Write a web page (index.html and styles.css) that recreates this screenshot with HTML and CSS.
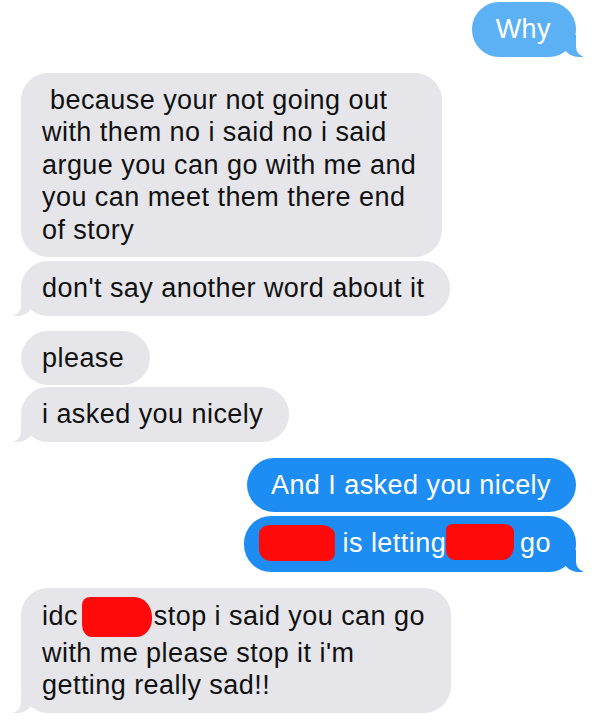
FILE: index.html
```html
<!DOCTYPE html>
<html>
<head>
<meta charset="utf-8">
<link rel="stylesheet" href="styles.css">
</head>
<body>
<div class="thread">
  <div class="bubble me light tail-r">Why</div>
  <div class="bubble them gap">&nbsp;because your not going out<br>with them no i said no i said<br>argue you can go with me and<br>you can meet them there end<br>of story</div>
  <div class="bubble them tight tail-l">don't say another word about it</div>
  <div class="bubble them mid">please</div>
  <div class="bubble them tight2 tail-l">i asked you nicely</div>
  <div class="bubble me gap">And I asked you nicely</div>
  <div class="bubble me tight tail-r"><span class="redact r1"></span> is letting<span class="redact r2"></span> go</div>
  <div class="bubble them gap tail-l">idc <span class="redact r3"></span>stop i said you can go<br>with me please stop it i'm<br>getting really sad!!</div>
</div>
</body>
</html>
```

FILE: styles.css
```css
* { box-sizing: border-box; }
html, body {
  margin: 0;
  background: #ffffff;
}
.thread {
  display: flex;
  flex-direction: column;
  align-items: flex-start;
  padding: 2px 24px 0 21px;
  font-family: "Liberation Sans", Arial, sans-serif;
  font-size: 27px;
  letter-spacing: 0.45px;
  line-height: 32.5px;
}
.bubble {
  position: relative;
  border-radius: 27px;
  white-space: nowrap;
}
.them {
  padding: 11px 26px 11px 21px;
  background: #e5e5ea;
  color: #111111;
}
.me {
  align-self: flex-end;
  padding: 11px 25px 11px 24px;
  background: #1d8cf3;
  color: #ffffff;
}
.me.light {
  background: #5cb1f4;
}
.gap { margin-top: 16px; }
.mid { margin-top: 15px; }
.tight { margin-top: 4px; }
.tight2 { margin-top: 2px; }

.tail-r::before,
.tail-l::before {
  content: "";
  position: absolute;
  bottom: 0;
  width: 20px;
  height: 22px;
  background: inherit;
}
.tail-r::after,
.tail-l::after {
  content: "";
  position: absolute;
  bottom: 0;
  width: 10px;
  height: 22px;
  background: #ffffff;
}
.tail-r::before {
  right: -7px;
  border-bottom-left-radius: 16px 14px;
}
.tail-r::after {
  right: -10px;
  border-bottom-left-radius: 10px;
}
.tail-l::before {
  left: -8px;
  border-bottom-right-radius: 16px 14px;
}
.tail-l::after {
  left: -10px;
  border-bottom-right-radius: 10px;
}

.redact {
  display: inline-block;
  background: #ff0a0a;
  vertical-align: middle;
}
.r1 {
  width: 76px;
  height: 36px;
  margin-left: -9px;
  margin-top: -4px;
  border-radius: 10px 14px 8px 12px / 9px 10px 8px 12px;
}
.r2 {
  width: 68px;
  height: 36px;
  margin-left: 0;
  margin-right: -2px;
  margin-top: -6px;
  border-radius: 6px 10px 12px 8px / 6px 8px 14px 10px;
}
.r3 {
  width: 70px;
  height: 40px;
  margin-left: -4px;
  margin-right: 2px;
  margin-top: -2px;
  border-radius: 8px 18px 16px 10px / 8px 20px 18px 12px;
}
```
